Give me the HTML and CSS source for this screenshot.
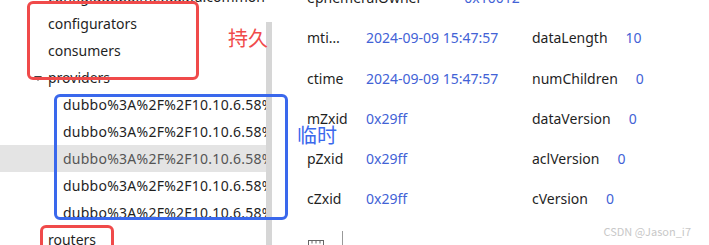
FILE: index.html
```html
<!DOCTYPE html>
<html lang="zh">
    <head>
        <meta charset="UTF-8" />
        <meta name="viewport" content="width=device-width, initial-scale=1.0" />
        <title>zk 节点</title>
        <link rel="stylesheet" href="styles.css">
    </head>
    <body>
        <div class="app">
            <!-- 左侧树 -->
            <aside class="tree">
                <ul class="nodes">
                    <li class="node lv1">config.dubbo.metadata.common</li>
                    <li class="node lv1">configurators</li>
                    <li class="node lv1">consumers</li>
                    <li class="node lv1"><span class="caret"></span>providers</li>
                    <li class="node lv2">dubbo%3A%2F%2F10.10.6.58%3A20880</li>
                    <li class="node lv2">dubbo%3A%2F%2F10.10.6.58%3A20881</li>
                    <li class="node lv2 on">dubbo%3A%2F%2F10.10.6.58%3A20882</li>
                    <li class="node lv2">dubbo%3A%2F%2F10.10.6.58%3A20883</li>
                    <li class="node lv2">dubbo%3A%2F%2F10.10.6.58%3A20884</li>
                    <li class="node lv1">routers</li>
                </ul>
                <div class="bar"><div class="thumb"></div></div>
            </aside>

            <!-- 우측 상세 -->
            <main class="detail">
                <div class="row">
                    <div class="cell wide"><span class="k">ephemeralOwner</span><span class="v">0x10012</span></div>
                </div>
                <div class="row">
                    <div class="cell"><span class="k k1">mti…</span><span class="v">2024-09-09 15:47:57</span></div>
                    <div class="cell"><span class="k">dataLength</span><span class="v v2">10</span></div>
                </div>
                <div class="row">
                    <div class="cell"><span class="k k1">ctime</span><span class="v">2024-09-09 15:47:57</span></div>
                    <div class="cell"><span class="k">numChildren</span><span class="v v2">0</span></div>
                </div>
                <div class="row">
                    <div class="cell"><span class="k k1">mZxid</span><span class="v">0x29ff</span></div>
                    <div class="cell"><span class="k">dataVersion</span><span class="v v2">0</span></div>
                </div>
                <div class="row">
                    <div class="cell"><span class="k k1">pZxid</span><span class="v">0x29ff</span></div>
                    <div class="cell"><span class="k">aclVersion</span><span class="v v2">0</span></div>
                </div>
                <div class="row">
                    <div class="cell"><span class="k k1">cZxid</span><span class="v">0x29ff</span></div>
                    <div class="cell"><span class="k">cVersion</span><span class="v v2">0</span></div>
                </div>
                <div class="tools">
                    <svg class="ico" width="18" height="14" viewBox="0 0 18 14">
                        <rect x="1.5" y="1.5" width="15" height="12" fill="none" stroke="#666" stroke-width="1"/>
                        <path d="M5 1.5v3M9 1.5v3M13 1.5v3" stroke="#666" stroke-width="1"/>
                    </svg>
                    <span class="sep"></span>
                </div>
            </main>

            <!-- 표시 -->
            <div class="mark red m1"></div>
            <div class="mark red m3"></div>
            <div class="mark blue m2"></div>
            <span class="note red-t n1">持久</span>
            <span class="note blue-t n2">临时</span>
            <span class="wm">CSDN @Jason_i7</span>
        </div>
    </body>
</html>
```

FILE: styles.css
```css
html,
body {
    margin: 0;
    padding: 0;
    background: #fff;
}
body {
    font-family: "Noto Sans", "Noto Sans CJK SC", sans-serif;
    font-size: 14px;
    color: #1f1f1f;
}
.app {
    position: relative;
    display: flex;
    width: 709px;
    height: 245px;
    overflow: hidden;
}

/* 트리 */
.tree {
    display: flex;
    width: 272px;
    flex: none;
}
.nodes {
    width: 266px;
    margin: -17px 0 0;
    padding: 0;
    list-style: none;
    overflow: hidden;
}
.node {
    height: 27px;
    line-height: 27px;
    white-space: nowrap;
    overflow: hidden;
}
.lv1 {
    padding-left: 48px;
    position: relative;
}
.lv2 {
    padding-left: 63px;
    letter-spacing: 0.25px;
}
.node.on {
    background: #e4e4e4;
    color: #555;
}
.caret {
    position: absolute;
    left: 34px;
    top: 12px;
    border-left: 4px solid transparent;
    border-right: 4px solid transparent;
    border-top: 5px solid #444;
}
.bar {
    width: 6px;
    padding-top: 22px;
}
.thumb {
    height: 100%;
    background: #d6d6d6;
}

/* 상세 */
.detail {
    flex: 1;
    padding-left: 35px;
    margin-top: -22px;
}
.row {
    display: grid;
    grid-template-columns: 225px 1fr;
    height: 40.3px;
    line-height: 40px;
}
.cell {
    white-space: nowrap;
}
.wide {
    grid-column: 1 / 3;
}
.k {
    display: inline-block;
    color: #1f1f1f;
}
.k1 {
    width: 59px;
}
.v {
    color: #4262d6;
}
.wide .v {
    margin-left: 42px;
}
.v2 {
    margin-left: 18px;
}
.tools {
    display: flex;
    align-items: flex-start;
    padding-top: 11px;
}
.ico {
    margin-top: 8px;
}
.sep {
    width: 1px;
    height: 20px;
    margin-left: 17px;
    background: #999;
}

/* 주석 표시 */
.mark {
    position: absolute;
    border: 3px solid;
    border-radius: 6px;
}
.red {
    border-color: #f04a4a;
}
.blue {
    border-color: #3a68ec;
}
.m1 {
    left: 27px;
    top: 1px;
    width: 166px;
    height: 73px;
}
.m2 {
    left: 54px;
    top: 94px;
    width: 228px;
    height: 120px;
}
.m3 {
    left: 40px;
    top: 225px;
    width: 68px;
    height: 30px;
}
.note {
    position: absolute;
    font-size: 20px;
    line-height: 1;
    font-family: "Noto Sans CJK SC", sans-serif;
}
.red-t {
    color: #f04a4a;
}
.blue-t {
    color: #3a68ec;
}
.n1 {
    left: 228px;
    top: 28px;
}
.n2 {
    left: 297px;
    top: 125px;
}
.wm {
    position: absolute;
    right: 18px;
    top: 223px;
    font-size: 11px;
    color: #c8c8c8;
    font-family: "Noto Sans CJK SC", sans-serif;
}
```
